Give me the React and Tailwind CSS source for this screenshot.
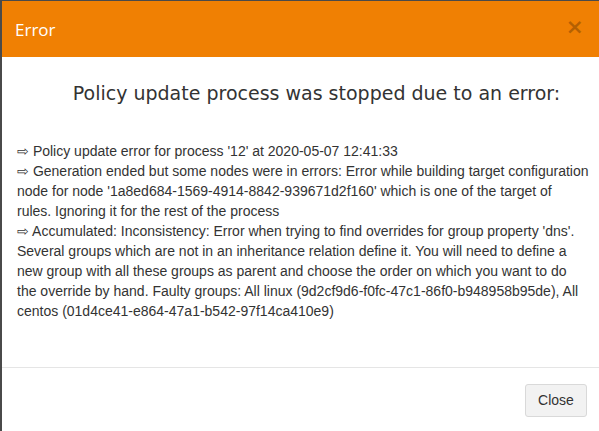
export default function App() {
  return (
    <div className="w-[599px] h-[431px] overflow-hidden bg-[#4a4a4a] relative">
      <div className="absolute left-[2px] top-[1px] w-[602px] h-[440px] bg-white flex flex-col">
        <div className="h-[56px] bg-[#f08003] flex items-center justify-between pl-[13px] pr-[20px]">
          <span className="text-white text-[17px] font-['Open_Sans',sans-serif] leading-none">Error</span>
          <span className="text-[22px] font-bold leading-none text-black/25 font-['DejaVu_Sans',sans-serif] -mt-[4px]">×</span>
        </div>
        <div className="flex flex-col pt-[24px] px-[15px] h-[310px] font-['Liberation_Sans',Arial,sans-serif] text-[14px] leading-[20px] text-[#333]">
          <h3 className="text-center text-[19px] leading-[24px] font-['DejaVu_Sans',sans-serif] text-[#333] mb-[36px] pl-[27px]">
            Policy update process was stopped due to an error:
          </h3>
          <div>⇨ Policy update error for process '12' at 2020-05-07 12:41:33</div>
          <div>⇨ Generation ended but some nodes were in errors: Error while building target configuration node for node '1a8ed684-1569-4914-8842-939671d2f160' which is one of the target of rules. Ignoring it for the rest of the process</div>
          <div>⇨ Accumulated: Inconsistency: Error when trying to find overrides for group property 'dns'. Several groups which are not in an inheritance relation define it. You will need to define a new group with all these groups as parent and choose the order on which you want to do the override by hand. Faulty groups: All linux (9d2cf9d6-f0fc-47c1-86f0-b948958b95de), All centos (01d4ce41-e864-47a1-b542-97f14ca410e9)</div>
        </div>
        <div className="border-t border-[#e5e5e5] flex justify-end pt-[16px] pr-[17px]">
          <button className="w-[62px] h-[33px] bg-[#f2f2f2] border border-[#d9d9d9] rounded-[3px] text-[14px] text-[#333] font-['Liberation_Sans',Arial,sans-serif]">Close</button>
        </div>
      </div>
    </div>
  );
}
